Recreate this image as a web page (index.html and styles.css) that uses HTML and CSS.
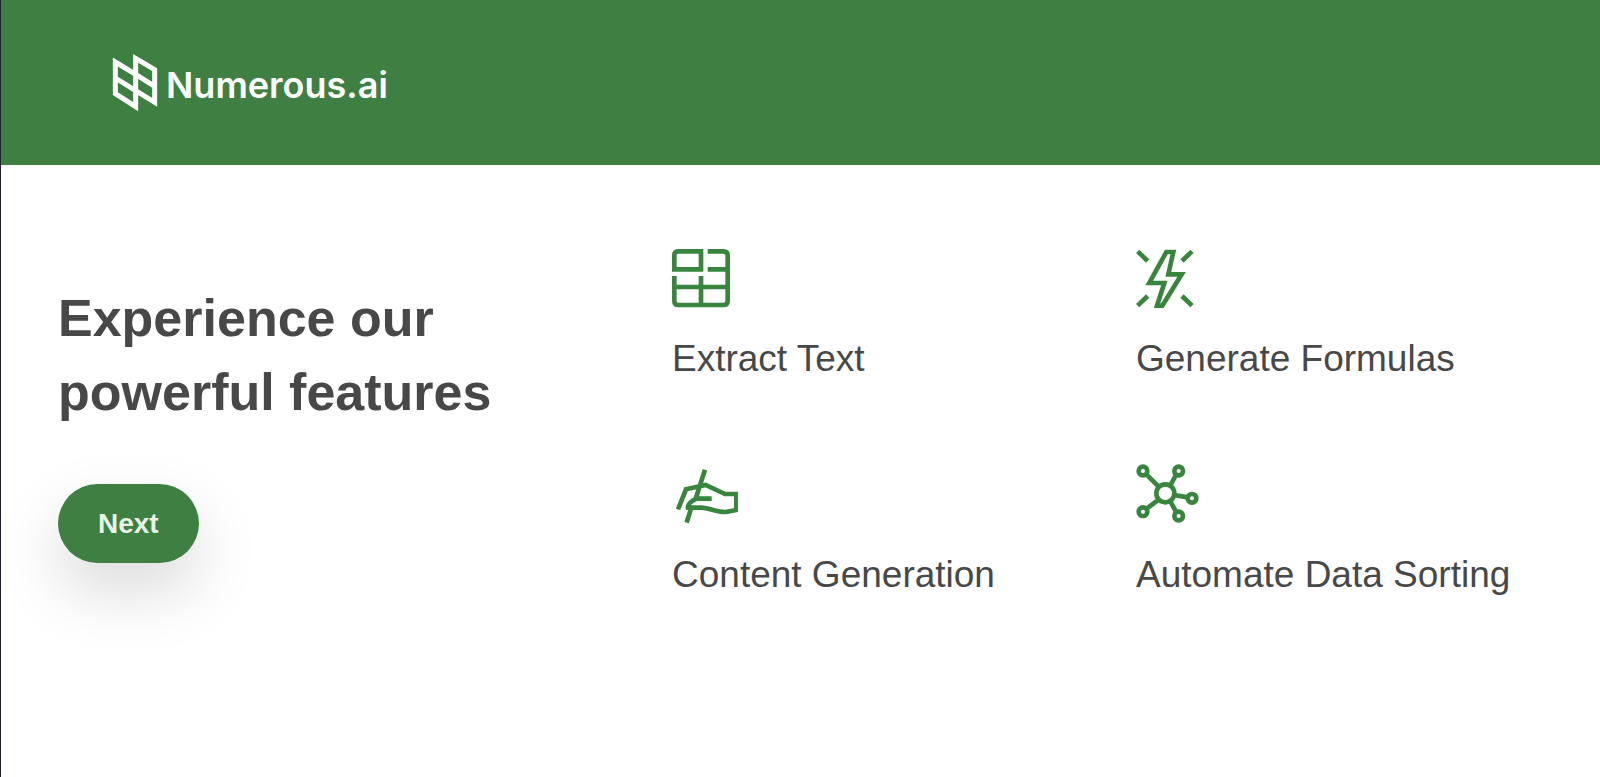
FILE: index.html
```html
<!DOCTYPE html>
<html lang="en">
<head>
<meta charset="utf-8">
<meta name="viewport" content="width=device-width, initial-scale=1">
<title>Numerous.ai</title>
<link rel="stylesheet" href="styles.css">
</head>
<body>
<header class="header">
  <div class="brand">
    <svg class="brand-mark" viewBox="36 42 138 174" aria-hidden="true">
      <path d="M46 66 107 103V200L46 161ZM46 114 107 152M107 55 164 89V187L107 152ZM107 103 164 139"/>
    </svg>
    <span class="brand-name">Numerous.ai</span>
  </div>
</header>
<main class="main">
  <section class="intro">
    <h1 class="title">Experience our<br>powerful features</h1>
    <button class="next" type="button">Next</button>
  </section>
  <ul class="features">
    <li class="feature">
      <svg class="icon" viewBox="36 30 198 198" aria-hidden="true">
        <path d="M43 103V61Q43 49 55 49H123V103ZM143 49H190Q203 49 203 61V197Q203 210 190 210H55Q43 210 43 197V123M143 103H203M43 156H203M123 123V210"/>
      </svg>
      <span class="label">Extract Text</span>
    </li>
    <li class="feature">
      <svg class="icon" viewBox="36 30 198 198" aria-hidden="true">
        <path d="M127 51H148L133 118H173L115 212H99L121 144H76ZM41 49 71 78M204 49 174 78M41 212 71 183M204 212 174 183"/>
      </svg>
      <span class="label">Generate Formulas</span>
    </li>
    <li class="feature">
      <svg class="icon" viewBox="36 18 198 198" aria-hidden="true">
        <path d="M54 163 78 103 106 97 137 90 195 117H229V165L198 171C169 172 150 159 124 158H84C82 150 94 136 109 131H155M135 44 107 131M94 158 80 203"/>
      </svg>
      <span class="label">Content Generation</span>
    </li>
    <li class="feature">
      <svg class="icon" viewBox="36 18 198 198" aria-hidden="true">
        <circle cx="124" cy="115" r="27"/>
        <circle cx="57" cy="48" r="13"/>
        <circle cx="164" cy="48" r="13"/>
        <circle cx="204" cy="130" r="13"/>
        <circle cx="164" cy="183" r="13"/>
        <circle cx="57" cy="170" r="13"/>
        <path d="M67 58 104 95M156 60 139 91M190 127 151 120M156 170 139 139M68 161 104 134"/>
      </svg>
      <span class="label">Automate Data Sorting</span>
    </li>
  </ul>
</main>
</body>
</html>
```
FILE: styles.css
```css
* {
  box-sizing: border-box;
}

body {
  margin: 0;
  min-height: 100vh;
  border-left: 1px solid #211f30;
  background: #fff;
  color: #484848;
  font-family: "Liberation Sans", Arial, sans-serif;
}

.header {
  padding: 54px 111px 53px;
  background: #3e7f42;
}

.brand {
  display: flex;
  align-items: center;
  gap: 8px;
  color: #fff;
}

.brand-mark {
  width: 46px;
  height: 58px;
  fill: none;
  stroke: #fff;
  stroke-width: 15;
}

.brand-name {
  padding-top: 4px;
  font-family: Inter, sans-serif;
  font-size: 36px;
  font-weight: 600;
  line-height: 48px;
}

.main {
  display: grid;
  grid-template-columns: 614fr 928fr;
  padding: 80px 0 80px 57px;
}

.intro {
  padding-top: 36px;
}

.title {
  margin: 0 0 55px;
  font-size: 52px;
  font-weight: 700;
  line-height: 74px;
}

.next {
  padding: 0 40px;
  border: 0;
  border-radius: 40px;
  background: #3e7f42;
  box-shadow: 0 28px 64px rgba(0, 0, 0, 0.15);
  color: #e8f3e8;
  font: 700 28px/79px "Liberation Sans", Arial, sans-serif;
}

.features {
  display: grid;
  grid-template-columns: 1fr 1fr;
  row-gap: 78px;
  margin: 0;
  padding: 0;
  list-style: none;
}

.feature {
  display: flex;
  flex-direction: column;
  gap: 24px;
}

.icon {
  width: 66px;
  height: 66px;
  fill: none;
  stroke: #38853d;
  stroke-width: 14;
}

.label {
  font-size: 37px;
  line-height: 48px;
}
```
